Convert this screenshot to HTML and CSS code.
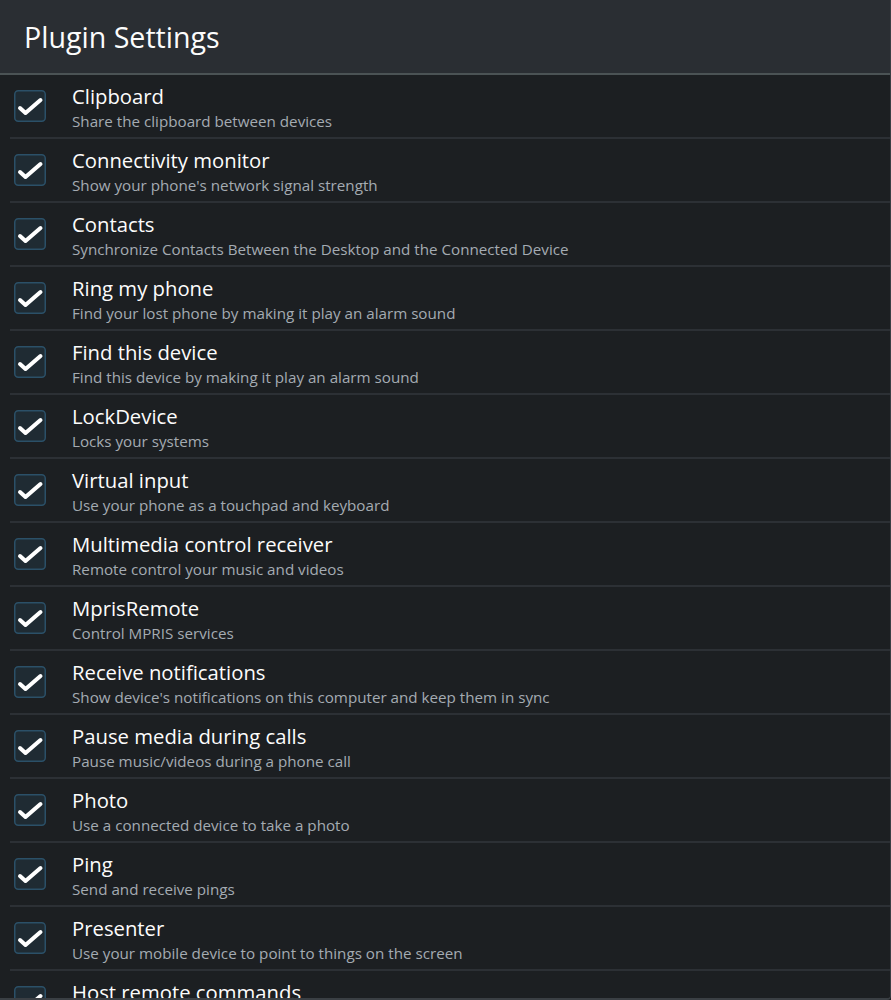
FILE: index.html
```html
<!DOCTYPE html>
<html>
<head>
<meta charset="utf-8">
<link rel="stylesheet" href="styles.css">
</head>
<body>
<div class="window">
  <header class="header"><h1 class="title">Plugin Settings</h1></header>
  <ul class="list">
    <li class="row"><span class="check"><svg viewBox="0 0 32 32" width="32" height="32"><rect x="0.75" y="0.75" width="30.5" height="30.5" rx="3.5" class="box"/><path d="M6 18 L11.5 23 L26.5 10" class="tick"/></svg></span><div class="text"><div class="name">Clipboard</div><div class="desc">Share the clipboard between devices</div></div></li>
    <li class="row"><span class="check"><svg viewBox="0 0 32 32" width="32" height="32"><rect x="0.75" y="0.75" width="30.5" height="30.5" rx="3.5" class="box"/><path d="M6 18 L11.5 23 L26.5 10" class="tick"/></svg></span><div class="text"><div class="name">Connectivity monitor</div><div class="desc">Show your phone's network signal strength</div></div></li>
    <li class="row"><span class="check"><svg viewBox="0 0 32 32" width="32" height="32"><rect x="0.75" y="0.75" width="30.5" height="30.5" rx="3.5" class="box"/><path d="M6 18 L11.5 23 L26.5 10" class="tick"/></svg></span><div class="text"><div class="name">Contacts</div><div class="desc">Synchronize Contacts Between the Desktop and the Connected Device</div></div></li>
    <li class="row"><span class="check"><svg viewBox="0 0 32 32" width="32" height="32"><rect x="0.75" y="0.75" width="30.5" height="30.5" rx="3.5" class="box"/><path d="M6 18 L11.5 23 L26.5 10" class="tick"/></svg></span><div class="text"><div class="name">Ring my phone</div><div class="desc">Find your lost phone by making it play an alarm sound</div></div></li>
    <li class="row"><span class="check"><svg viewBox="0 0 32 32" width="32" height="32"><rect x="0.75" y="0.75" width="30.5" height="30.5" rx="3.5" class="box"/><path d="M6 18 L11.5 23 L26.5 10" class="tick"/></svg></span><div class="text"><div class="name">Find this device</div><div class="desc">Find this device by making it play an alarm sound</div></div></li>
    <li class="row"><span class="check"><svg viewBox="0 0 32 32" width="32" height="32"><rect x="0.75" y="0.75" width="30.5" height="30.5" rx="3.5" class="box"/><path d="M6 18 L11.5 23 L26.5 10" class="tick"/></svg></span><div class="text"><div class="name">LockDevice</div><div class="desc">Locks your systems</div></div></li>
    <li class="row"><span class="check"><svg viewBox="0 0 32 32" width="32" height="32"><rect x="0.75" y="0.75" width="30.5" height="30.5" rx="3.5" class="box"/><path d="M6 18 L11.5 23 L26.5 10" class="tick"/></svg></span><div class="text"><div class="name">Virtual input</div><div class="desc">Use your phone as a touchpad and keyboard</div></div></li>
    <li class="row"><span class="check"><svg viewBox="0 0 32 32" width="32" height="32"><rect x="0.75" y="0.75" width="30.5" height="30.5" rx="3.5" class="box"/><path d="M6 18 L11.5 23 L26.5 10" class="tick"/></svg></span><div class="text"><div class="name">Multimedia control receiver</div><div class="desc">Remote control your music and videos</div></div></li>
    <li class="row"><span class="check"><svg viewBox="0 0 32 32" width="32" height="32"><rect x="0.75" y="0.75" width="30.5" height="30.5" rx="3.5" class="box"/><path d="M6 18 L11.5 23 L26.5 10" class="tick"/></svg></span><div class="text"><div class="name">MprisRemote</div><div class="desc">Control MPRIS services</div></div></li>
    <li class="row"><span class="check"><svg viewBox="0 0 32 32" width="32" height="32"><rect x="0.75" y="0.75" width="30.5" height="30.5" rx="3.5" class="box"/><path d="M6 18 L11.5 23 L26.5 10" class="tick"/></svg></span><div class="text"><div class="name">Receive notifications</div><div class="desc">Show device's notifications on this computer and keep them in sync</div></div></li>
    <li class="row"><span class="check"><svg viewBox="0 0 32 32" width="32" height="32"><rect x="0.75" y="0.75" width="30.5" height="30.5" rx="3.5" class="box"/><path d="M6 18 L11.5 23 L26.5 10" class="tick"/></svg></span><div class="text"><div class="name">Pause media during calls</div><div class="desc">Pause music/videos during a phone call</div></div></li>
    <li class="row"><span class="check"><svg viewBox="0 0 32 32" width="32" height="32"><rect x="0.75" y="0.75" width="30.5" height="30.5" rx="3.5" class="box"/><path d="M6 18 L11.5 23 L26.5 10" class="tick"/></svg></span><div class="text"><div class="name">Photo</div><div class="desc">Use a connected device to take a photo</div></div></li>
    <li class="row"><span class="check"><svg viewBox="0 0 32 32" width="32" height="32"><rect x="0.75" y="0.75" width="30.5" height="30.5" rx="3.5" class="box"/><path d="M6 18 L11.5 23 L26.5 10" class="tick"/></svg></span><div class="text"><div class="name">Ping</div><div class="desc">Send and receive pings</div></div></li>
    <li class="row"><span class="check"><svg viewBox="0 0 32 32" width="32" height="32"><rect x="0.75" y="0.75" width="30.5" height="30.5" rx="3.5" class="box"/><path d="M6 18 L11.5 23 L26.5 10" class="tick"/></svg></span><div class="text"><div class="name">Presenter</div><div class="desc">Use your mobile device to point to things on the screen</div></div></li>
    <li class="row"><span class="check"><svg viewBox="0 0 32 32" width="32" height="32"><rect x="0.75" y="0.75" width="30.5" height="30.5" rx="3.5" class="box"/><path d="M6 18 L11.5 23 L26.5 10" class="tick"/></svg></span><div class="text"><div class="name">Host remote commands</div><div class="desc">Trigger commands predefined on the remote device</div></div></li>
  </ul>
</div>
</body>
</html>
```

FILE: styles.css
```css
html, body {
  margin: 0;
  padding: 0;
  background: #1c1f22;
  overflow: hidden;
}
.window {
  height: 1000px;
  box-sizing: border-box;
  overflow: hidden;
  background: #1c1f22;
  border-right: 1px solid #3a3f44;
  border-bottom: 2px solid #3a3f44;
  border-bottom-right-radius: 4px;
  font-family: "Open Sans", "Noto Sans", sans-serif;
}
.header {
  height: 73px;
  background: #2a2e33;
  border-bottom: 2px solid #4b5355;
  display: flex;
  align-items: center;
  padding-left: 24px;
}
.title {
  margin: 0;
  font-size: 28.6px;
  font-weight: 400;
  color: #fcfcfc;
}
.list {
  list-style: none;
  margin: 0;
  padding: 0;
}
.row {
  margin-left: 10px;
  height: 62px;
  border-bottom: 2px solid #2c3035;
  display: flex;
  align-items: center;
  padding-left: 4px;
  gap: 26px;
}
.check {
  width: 32px;
  height: 32px;
  display: flex;
  flex: none;
}
.box {
  fill: #1f2b33;
  stroke: #2b5068;
  stroke-width: 1.5;
}
.tick {
  fill: none;
  stroke: #ffffff;
  stroke-width: 4;
  stroke-linecap: round;
  stroke-linejoin: round;
}
.text {
  align-self: flex-start;
  padding-top: 9px;
  display: flex;
  flex-direction: column;
  white-space: nowrap;
}
.name {
  font-size: 20.3px;
  line-height: 24px;
  color: #fcfcfc;
}
.desc {
  font-size: 15.2px;
  line-height: 26px;
  color: #a4abb2;
}
```
